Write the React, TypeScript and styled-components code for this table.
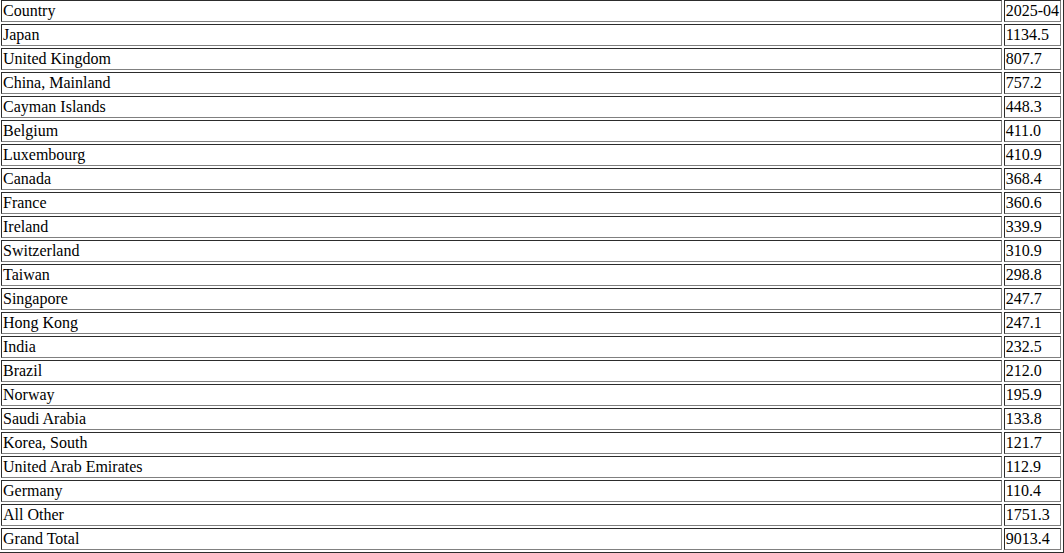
import styled, { createGlobalStyle } from 'styled-components';

const GlobalStyle = createGlobalStyle`
  body {
    margin: 0;
    font-family: "Liberation Serif", "Times New Roman", serif;
    font-size: 16px;
    color: #000;
    background: #fff;
  }
`;

const rows: [string, string][] = [
  ['Japan', '1134.5'],
  ['United Kingdom', '807.7'],
  ['China, Mainland', '757.2'],
  ['Cayman Islands', '448.3'],
  ['Belgium', '411.0'],
  ['Luxembourg', '410.9'],
  ['Canada', '368.4'],
  ['France', '360.6'],
  ['Ireland', '339.9'],
  ['Switzerland', '310.9'],
  ['Taiwan', '298.8'],
  ['Singapore', '247.7'],
  ['Hong Kong', '247.1'],
  ['India', '232.5'],
  ['Brazil', '212.0'],
  ['Norway', '195.9'],
  ['Saudi Arabia', '133.8'],
  ['Korea, South', '121.7'],
  ['United Arab Emirates', '112.9'],
  ['Germany', '110.4'],
  ['All Other', '1751.3'],
  ['Grand Total', '9013.4'],
];

function App() {
  return (
    <>
      <GlobalStyle />
      <Table>
        <tbody>
          <tr>
            <Cell>Country</Cell>
            <Cell $narrow>2025-04</Cell>
          </tr>
          {rows.map(([country, value]) => (
            <tr key={country}>
              <Cell>{country}</Cell>
              <Cell $narrow>{value}</Cell>
            </tr>
          ))}
        </tbody>
      </Table>
    </>
  );
}

const Table = styled.table`
  width: calc(100% + 2px);
  margin: -3px 0 0 -2px;
  border: 1px outset #808080;
  border-spacing: 2px;
`;

const Cell = styled.td<{ $narrow?: boolean }>`
  width: ${(p) => (p.$narrow ? '1%' : 'auto')};
  padding: 1px;
  border: 1px inset #808080;
  line-height: normal;
  white-space: nowrap;
`;

export default App;
